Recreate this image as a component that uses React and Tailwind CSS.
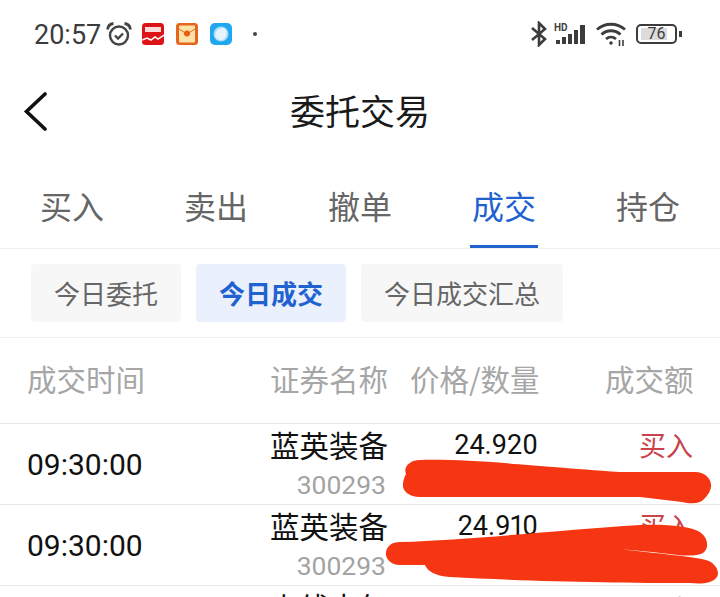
import React from 'react';

const cjk = '"Noto Sans CJK SC", "Noto Sans", sans-serif';
const digits = 'Roboto, sans-serif';

const tabs = ['买入', '卖出', '撤单', '成交', '持仓'];
const filters = ['今日委托', '今日成交', '今日成交汇总'];

const rows = [
    { time: '09:30:00', name: '蓝英装备', code: '300293', price: '24.920', side: '买入' },
    { time: '09:30:00', name: '蓝英装备', code: '300293', price: '24.910', side: '买入' },
];

const StatusBar = () => (
    <div className="h-[68px] flex items-center pl-[34px] pr-[38px] text-[#3c3c3c]">
        <span className="block pt-[2px] text-[27px] leading-none" style={{ fontFamily: digits }}>20:57</span>
        <svg width="26" height="24" viewBox="0 0 26 24" fill="none" stroke="#444" strokeWidth="2.4" className="ml-[5px]">
            <circle cx="13" cy="13.500" r="9" />
            <path d="M9 13.500l3 3 5-5" />
            <path d="M1.500 7.500C2 4 4.500 1.800 7.500 1.500M24.500 7.500C24 4 21.500 1.800 18.500 1.500" strokeWidth="2.800" />
        </svg>
        <svg width="22" height="22" viewBox="0 0 22 22" className="ml-[10px]">
            <rect width="22" height="22" rx="3.500" fill="#dc1417" />
            <rect x="3" y="4" width="16" height="5" fill="#fbdcdc" />
            <path d="M0 17l5-2 4 2 4-3 3 2 6-4" stroke="#fff" strokeWidth="1.500" fill="none" />
        </svg>
        <svg width="22" height="22" viewBox="0 0 22 22" className="ml-[12px]">
            <rect width="22" height="22" rx="3.500" fill="#e5661c" />
            <rect x="3" y="2.500" width="16" height="17" rx="1" fill="#fde3a7" />
            <path d="M3 6l8 5 8-5" stroke="#e5661c" strokeWidth="1" fill="none" />
            <circle cx="11" cy="10.500" r="3" fill="#ee5a16" />
        </svg>
        <svg width="22" height="22" viewBox="0 0 22 22" className="ml-[12px]">
            <rect width="22" height="22" rx="5" fill="#1fa7f0" />
            <circle cx="11" cy="11" r="7.500" fill="#a9dcf8" />
            <path d="M5.500 14C4 9 8.500 3.800 14.500 5.200 18 8 17 14 13 16.800 10 18 7 16.500 5.500 14Z" fill="#e4f4fd" />
        </svg>
        <span className="ml-[21px] w-[4px] h-[4px] rounded-full bg-[#444]"></span>
        <div className="flex-1"></div>
        <svg width="18" height="26" viewBox="0 0 18 26" fill="none" stroke="#3c3c3c" strokeWidth="2.600">
            <path d="M2 7l13 11-6 6V2l6 6L2 19" />
        </svg>
        <div className="relative ml-[6px] w-[34px] h-[20px]">
            <span className="absolute left-0 top-0 text-[10px] leading-[8px] font-bold" style={{ fontFamily: digits }}>HD</span>
            <div className="absolute left-[2px] right-0 bottom-0 flex items-end gap-[2px]">
                <span className="w-[4px] h-[4px] bg-[#3c3c3c]"></span>
                <span className="w-[4px] h-[7px] bg-[#3c3c3c]"></span>
                <span className="w-[4px] h-[10px] bg-[#3c3c3c]"></span>
                <span className="w-[4px] h-[14px] bg-[#3c3c3c]"></span>
                <span className="w-[5px] h-[19px] bg-[#3c3c3c]"></span>
            </div>
        </div>
        <svg width="30" height="24" viewBox="0 0 30 24" fill="none" stroke="#3c3c3c" strokeWidth="2.800" className="ml-[8px]">
            <path d="M1 7.500c8-7 20-7 28 0M5.500 12.500c5.500-5 13.500-5 19 0M10 17c3-2.500 7-2.500 10 0" />
            <circle cx="15" cy="21" r="1.800" fill="#3c3c3c" stroke="none" />
            <path d="M23.500 18v6M27 18v6" strokeWidth="1.600" />
        </svg>
        <div className="relative ml-[10px] w-[41px] h-[20px] rounded-[5px] border-2 border-[#3c3c3c] overflow-hidden">
            <div className="ml-[3px] my-[2px] h-[12px] w-[26px] bg-[#dcdcdc]"></div>
            <span className="absolute inset-0 flex items-center justify-center text-[16px] leading-none" style={{ fontFamily: digits }}>76</span>
        </div>
        <span className="ml-[2px] w-[3px] h-[6px] bg-[#3c3c3c]"></span>
    </div>
);

const App = () => {
    return (
        <div className="w-[720px] h-[597px] overflow-hidden bg-white relative" style={{ fontFamily: cjk }}>
            <StatusBar />

            {/* Title */}
            <div className="relative h-[90px] pb-[7px] flex items-center justify-center">
                <svg width="26" height="40" viewBox="0 0 26 40" fill="none" stroke="#111" strokeWidth="3.600" strokeLinecap="round" className="absolute left-[22px] top-[24px]">
                    <path d="M23 2L4.500 19.500 23 37" />
                </svg>
                <span className="text-[35px] leading-none text-[#1a1a1a]">委托交易</span>
            </div>

            {/* Tabs */}
            <div className="h-[91px] flex border-b border-[#f0f0f0]">
                {tabs.map(t => (
                    <div key={t} className="flex-1 flex justify-center">
                        <div className={`h-full flex items-center px-[2px] pt-[6px] border-b-[3px] ${t === '成交' ? 'border-[#1f62d0] text-[#1f62d0]' : 'border-transparent text-[#666666]'} text-[32px] leading-none`}>
                            {t}
                        </div>
                    </div>
                ))}
            </div>

            {/* Filters */}
            <div className="h-[89px] flex items-center gap-[15px] pl-[31px] border-b border-[#f0f0f0]">
                {filters.map(f => (
                    <div key={f} className={`h-[58px] px-[23px] flex items-center rounded-[4px] text-[26px] leading-none ${f === '今日成交' ? 'bg-[#ebf1fc] text-[#1f62d0] font-bold' : 'bg-[#f7f7f7] text-[#666666]'}`}>
                        {f}
                    </div>
                ))}
            </div>

            {/* Table header */}
            <div className="h-[86px] flex items-center pl-[27px] pb-[3px] text-[29.5px] leading-none text-[#a6a6a6] border-b border-[#e8e8e8]">
                <span className="w-[243px]">成交时间</span>
                <span className="w-[140px]">证券名称</span>
                <span className="w-[195px]">价格/数量</span>
                <span>成交额</span>
            </div>

            {/* Rows */}
            {rows.map((r, i) => (
                <div key={i} className="h-[81px] flex items-center pl-[27px] border-b border-[#e8e8e8]">
                    <span className="w-[243px] pt-[2px] text-[30px] leading-none text-[#111]" style={{ fontFamily: digits }}>{r.time}</span>
                    <div className="w-[118px] text-right">
                        <div className="text-[29.5px] leading-[40px] text-[#111]">{r.name}</div>
                        <div className="pr-[2px] pt-[1px] text-[26.5px] leading-[40px] text-[#a3a3a3]" style={{ fontFamily: digits }}>{r.code}</div>
                    </div>
                    <div className="w-[150px] text-right self-start pt-[1px] text-[27px] leading-[40px] text-[#111] proportional-nums" style={{ fontFamily: digits }}>{r.price}</div>
                    <div className="flex-1 text-right self-start pt-[1px] pr-[27px] text-[27px] leading-[40px] text-[#c9434a]">{r.side}</div>
                </div>
            ))}

            {/* Next row, cut off at the bottom edge */}
            <div className="flex pl-[270px] pr-[27px] justify-between leading-[40px]">
                <span className="text-[29.5px] text-[#111]">上线大年</span>
                <span className="pt-[3px] text-[27px] text-[#1a6e5e]">卖出</span>
            </div>

            {/* Scribbles over the hidden figures */}
            <svg width="720" height="597" viewBox="0 0 720 597" fill="#f63612" className="absolute left-0 top-0 pointer-events-none">
                <path d="M420 460C470 459 510 464 620 472L695 472C706 472 712 480 711 487 710 493 706 497 704 499 700 504 690 504 682 502L640 497 420 497C408 497 402 490 403 484 403 480 405 476 406 474 403 467 410 460 420 460Z" />
                <path d="M400 542C470 540 560 530 640 525 670 524 690 527 698 531 708 536 710 548 703 553 697 556 688 556 678 555 655 552 630 550 620 549 660 554 690 556 706 560 716 563 720 572 717 577 712 584 700 584 690 583 620 583 520 581 450 577 436 576 428 572 425 565L400 565C390 565 385 558 386 552 387 546 392 542 400 542Z" />
            </svg>
        </div>
    );
};

export default App;
